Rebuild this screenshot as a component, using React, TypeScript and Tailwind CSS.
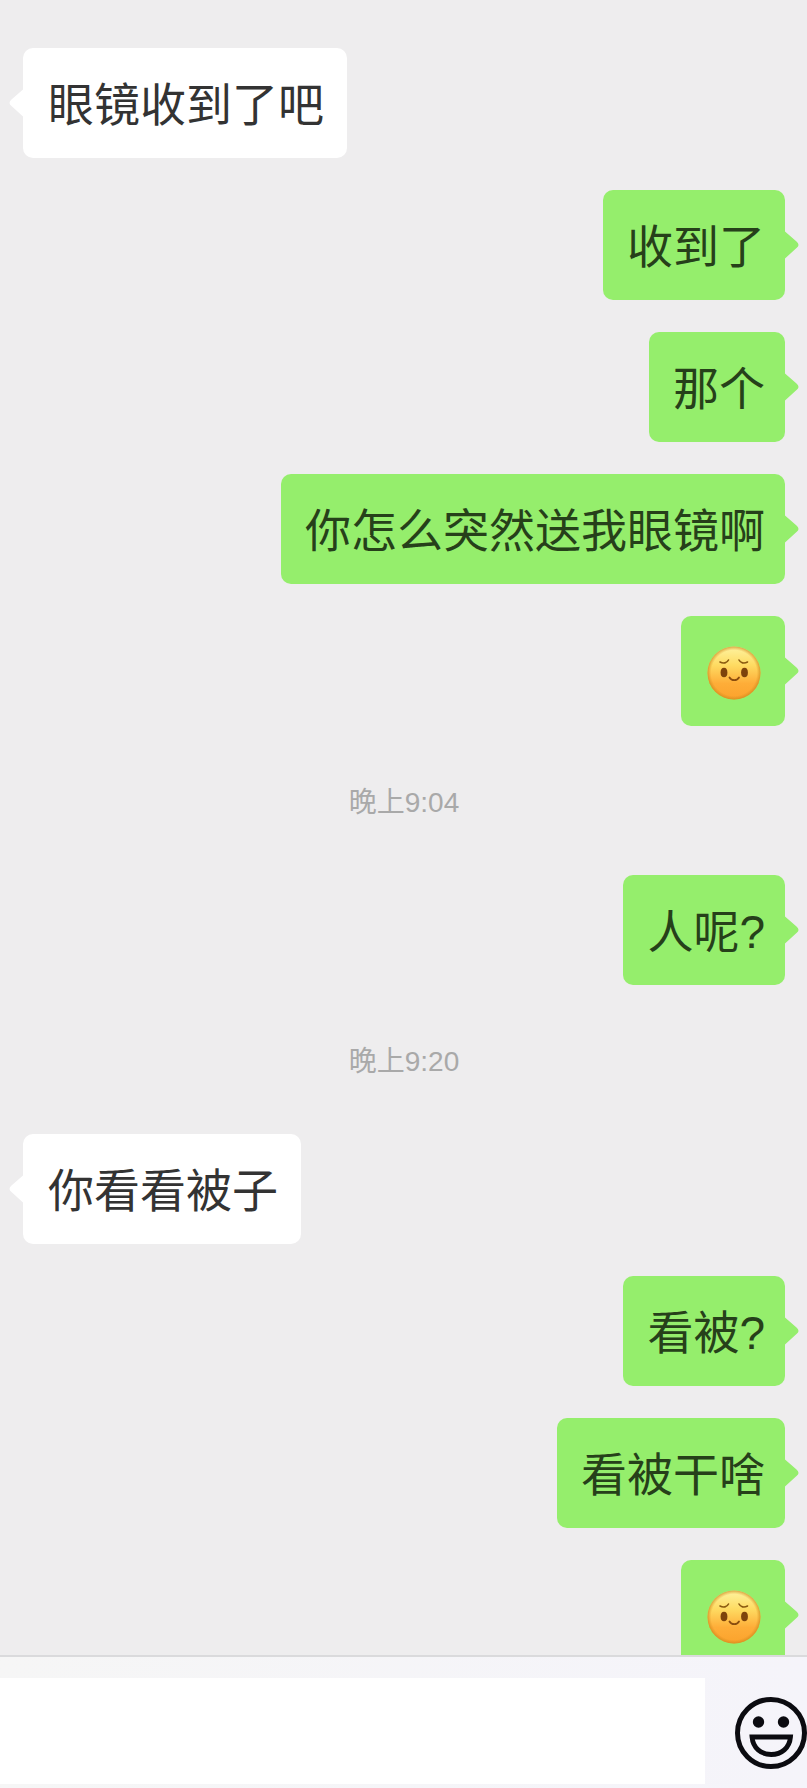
import { useId } from 'react';
import { clsx } from 'clsx';

type Message =
  | { id: number; type: 'text'; from: 'me' | 'them'; text: string }
  | { id: number; type: 'emoji'; from: 'me' | 'them' }
  | { id: number; type: 'time'; text: string };

const messages: Message[] = [
  { id: 1, type: 'text', from: 'them', text: '眼镜收到了吧' },
  { id: 2, type: 'text', from: 'me', text: '收到了' },
  { id: 3, type: 'text', from: 'me', text: '那个' },
  { id: 4, type: 'text', from: 'me', text: '你怎么突然送我眼镜啊' },
  { id: 5, type: 'emoji', from: 'me' },
  { id: 6, type: 'time', text: '晚上9:04' },
  { id: 7, type: 'text', from: 'me', text: '人呢?' },
  { id: 8, type: 'time', text: '晚上9:20' },
  { id: 9, type: 'text', from: 'them', text: '你看看被子' },
  { id: 10, type: 'text', from: 'me', text: '看被?' },
  { id: 11, type: 'text', from: 'me', text: '看被干啥' },
  { id: 12, type: 'emoji', from: 'me' },
];

function WeakFace() {
  const id = useId();
  return (
    <svg viewBox="0 0 54 54" className="w-[54px] h-[54px]" role="img" aria-label="虚弱">
      <defs>
        <linearGradient id={`${id}-skin`} x1="0" y1="0" x2="0" y2="1">
          <stop offset="0" stopColor="#fef3a0" />
          <stop offset="0.35" stopColor="#fedb62" />
          <stop offset="0.7" stopColor="#fead38" />
          <stop offset="1" stopColor="#fba22c" />
        </linearGradient>
        <radialGradient id={`${id}-edge`} cx="0.5" cy="0.5" r="0.5">
          <stop offset="0.86" stopColor="#d98a1c" stopOpacity="0" />
          <stop offset="1" stopColor="#c98a1e" stopOpacity="0.7" />
        </radialGradient>
      </defs>
      <circle cx="27" cy="27" r="26.5" fill={`url(#${id}-skin)`} />
      <circle cx="27" cy="27" r="26.5" fill={`url(#${id}-edge)`} />
      <path
        d="M13 16C16.5 18 20 17 21.5 14M32 14C33.5 17 37 18 40.5 16"
        fill="none"
        stroke="#8a5a10"
        strokeWidth="1.6"
        strokeLinecap="round"
      />
      <ellipse cx="17" cy="26.5" rx="3.4" ry="4.7" fill="#7d430c" />
      <ellipse cx="37.5" cy="26.5" rx="3.4" ry="4.7" fill="#7d430c" />
      <path
        d="M22.5 31.5C24.5 35 30 35 32 31.5"
        fill="none"
        stroke="#8a4c0e"
        strokeWidth="1.8"
        strokeLinecap="round"
      />
    </svg>
  );
}

function Tail({ mine }: { mine: boolean }) {
  return (
    <svg
      viewBox="0 0 15 30"
      className={clsx(
        'absolute top-1/2 -translate-y-1/2 w-[15px] h-[30px]',
        mine ? 'left-full -ml-px text-[#95ee6c]' : 'right-full -mr-px text-white -scale-x-100'
      )}
      aria-hidden="true"
    >
      <path d="M0 0L1 1.5L12.5 11.5Q16.5 15 12.5 18L1 28.5L0 30Z" fill="currentColor" />
    </svg>
  );
}

function Bubble({ message }: { message: Exclude<Message, { type: 'time' }> }) {
  const mine = message.from === 'me';
  return (
    <li className={clsx('flex', mine ? 'justify-end' : 'justify-start')}>
      <div
        className={clsx(
          'relative flex items-center h-[110px] pt-1 rounded-[10px]',
          mine ? 'bg-[#95ee6c] text-[#26401a]' : 'bg-white text-[#333333]',
          message.type === 'emoji' ? 'pl-[26px] pr-6' : mine ? 'pl-6 pr-5' : 'pl-[25px] pr-[23px]'
        )}
      >
        {message.type === 'emoji' ? (
          <WeakFace />
        ) : (
          <p className="text-[46px] leading-[60px] whitespace-nowrap">{message.text}</p>
        )}
        <Tail mine={mine} />
      </div>
    </li>
  );
}

function GrinIcon() {
  return (
    <svg viewBox="0 0 72 72" className="w-[72px] h-[72px]" fill="none" stroke="#0b0b10" aria-hidden="true">
      <circle cx="36" cy="36" r="33.5" strokeWidth="5" />
      <circle cx="23.5" cy="25" r="5.7" fill="#0b0b10" stroke="none" />
      <circle cx="48.5" cy="25" r="5.7" fill="#0b0b10" stroke="none" />
      <path d="M17 40H55.5C54.5 51 46.5 57.5 36.2 57.5C26 57.5 18 51 17 40Z" strokeWidth="4.8" />
    </svg>
  );
}

export default function App() {
  return (
    <div
      lang="zh-CN"
      className="flex flex-col h-screen bg-[#eeedee] font-['Liberation_Sans','Noto_Sans_CJK_SC',sans-serif]"
    >
      <main className="flex-1 min-h-0 overflow-hidden">
        <ul className="flex flex-col gap-8 pt-12 pl-[23px] pr-[22px]">
          {messages.map((message) =>
            message.type === 'time' ? (
              <li key={message.id} className="flex items-center justify-center h-[85px] pt-1">
                <time className="text-[28px] leading-10 text-[#a9a9a9]">{message.text}</time>
              </li>
            ) : (
              <Bubble key={message.id} message={message} />
            )
          )}
        </ul>
      </main>

      <footer className="flex items-center justify-between gap-[30px] pt-[21px] pb-1 border-t-2 border-[#dadadc] bg-linear-to-r from-[#f6f6f6] to-[#f5f4fa]">
        <input
          type="text"
          aria-label="输入消息"
          className="flex-1 min-w-0 h-[106px] px-6 bg-white text-[46px] outline-none"
        />
        <button type="button" aria-label="表情" className="shrink-0 pt-1">
          <GrinIcon />
        </button>
      </footer>
    </div>
  );
}
